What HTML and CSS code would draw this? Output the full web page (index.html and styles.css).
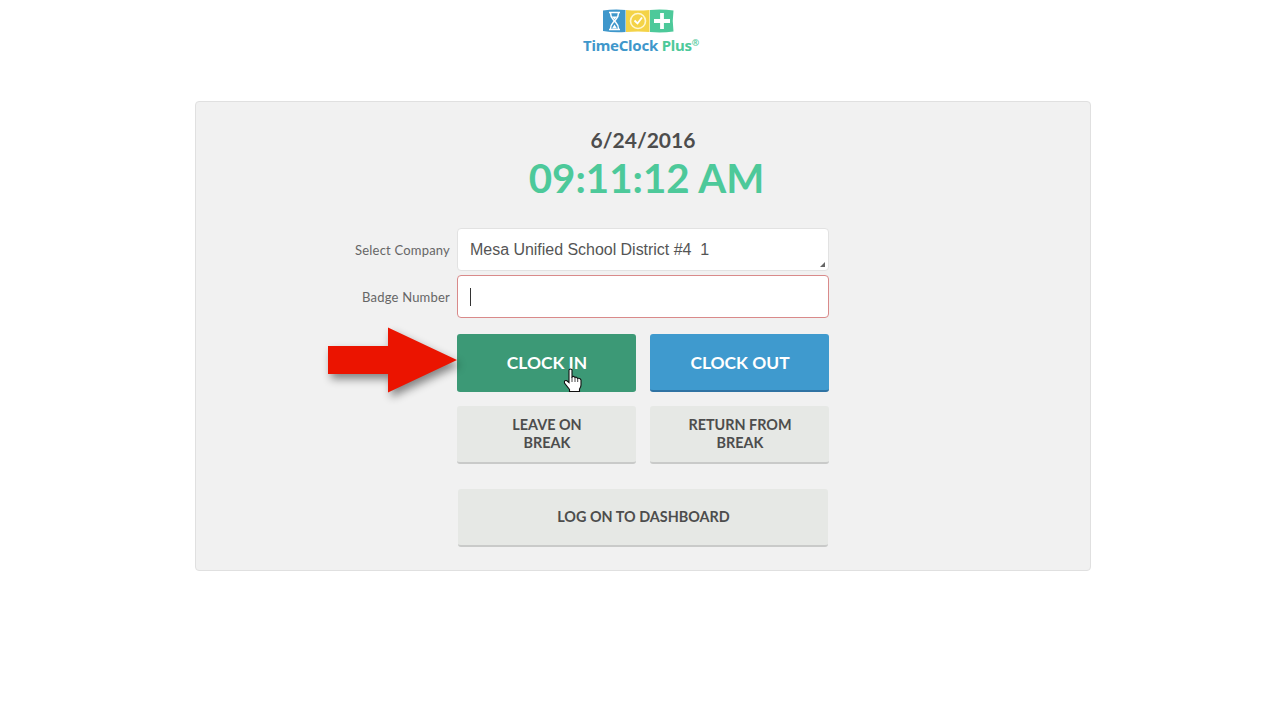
FILE: index.html
```html
<!DOCTYPE html>
<html lang="en">
<head>
    <meta charset="UTF-8">
    <meta name="viewport" content="width=device-width, initial-scale=1.0">
    <title>TimeClock Plus</title>
    <link rel="stylesheet" href="styles.css">
</head>
<body>
    <header class="header">
        <svg class="logo-icon" width="72" height="24" viewBox="0 0 72 24">
            <path d="M1 1.5 Q12 0 23.5 1 V23 Q12 24 1 22 Z" fill="#3f97cb"/>
            <path d="M24 1 Q36 2 47.5 1 V23 Q36 22 24 23 Z" fill="#f4d347"/>
            <path d="M48 1 Q60 0 71.5 1.5 Q70 12 71.5 22.5 Q60 24 48 23 Z" fill="#4dc99a"/>
            <path d="M7 3.5 H18 M7 20.5 H18 M8.5 4 C8.5 9 11 10 12.5 12 C11 14 8.5 15 8.5 20 M16.5 4 C16.5 9 14 10 12.5 12 C14 14 16.5 15 16.5 20" fill="none" stroke="#fff" stroke-width="1.5"/>
            <path d="M10 19.5 L12.5 15.5 L15 19.5 Z M10 7.5 H15 L12.5 10.5 Z" fill="#fff"/>
            <circle cx="36" cy="12" r="7.5" fill="none" stroke="#fff7cf" stroke-width="1.6"/>
            <path d="M32.5 11.5 L35.5 14.5 L40 8.5" fill="none" stroke="#fff" stroke-width="1.8"/>
            <path d="M60 4 V20 M52 12 H68" stroke="#fff" stroke-width="3.8"/>
        </svg>
        <div class="logo-text">TimeClock <span class="plus">Plus<sup>®</sup></span></div>
    </header>

    <main class="panel">
        <div class="date">6/24/2016</div>
        <div class="time">09:11:12 AM</div>

        <div class="form">
            <label class="label">Select Company</label>
            <div class="field select">Mesa Unified School District #4&nbsp; 1</div>
            <label class="label">Badge Number</label>
            <div class="field error"><span class="caret"></span></div>
        </div>

        <div class="buttons">
            <button class="btn clock-in">CLOCK IN
                <svg class="arrow" width="150" height="90" viewBox="0 0 150 90">
                    <path d="M10 28 H70 V9.5 L139 42 L70 74.5 V56 H10 Z" fill="#eb1400"/>
                </svg>
                <svg class="cursor" width="20" height="25" viewBox="0 0 20 25">
                    <path d="M6 2 Q7.5 0 9 2 V9 Q10.5 7.5 12 9.5 Q13.5 8.5 14.5 10.5 Q17 9.5 18 12 V17 Q18 19 16.5 21 V23.5 H6.5 V21.5 L1.5 15 Q1 12 3.5 12.5 L6 14.5 Z" fill="#fff" stroke="#111" stroke-width="1.1"/>
                    <path d="M9 9 V14 M12 9.5 V14 M14.7 10.5 V14" stroke="#333" stroke-width="0.9"/>
                </svg>
            </button>
            <button class="btn clock-out">CLOCK OUT</button>
            <button class="btn">LEAVE ON<br>BREAK</button>
            <button class="btn">RETURN FROM<br>BREAK</button>
            <button class="btn dashboard">LOG ON TO DASHBOARD</button>
        </div>
    </main>
</body>
</html>
```
FILE: styles.css
```css
* {
    box-sizing: border-box;
}
body {
    margin: 0;
    background: #fff;
    font-family: Lato, sans-serif;
    color: #4d4d4d;
}
.header {
    height: 101px;
    padding: 9px 0 0 2px;
    display: flex;
    flex-direction: column;
    align-items: center;
}
.logo-icon {
    display: block;
    margin-right: 6px;
}
.logo-text {
    font-family: "Noto Sans", sans-serif;
    font-size: 15px;
    line-height: 20px;
    margin-top: 2px;
    font-weight: 700;
    letter-spacing: -0.25px;
    color: #3f97cb;
    white-space: nowrap;
}
.plus {
    color: #4dc99a;
}
.plus sup {
    font-size: 9px;
    line-height: 0;
    vertical-align: 5px;
}
.panel {
    width: 896px;
    height: 470px;
    margin-left: 195px;
    background: #f1f1f1;
    border: 1px solid #e0e0e0;
    border-radius: 4px;
    padding-top: 24px;
}
.date {
    text-align: center;
    font-size: 21px;
    line-height: 28px;
    font-weight: 700;
}
.time {
    text-align: center;
    padding-left: 7px;
    font-size: 40.3px;
    line-height: 46px;
    margin-top: 1px;
    font-weight: 700;
    color: #4dc99a;
}
.form {
    display: grid;
    grid-template-columns: 254px 372px;
    grid-template-rows: 43px 43px;
    column-gap: 7px;
    row-gap: 4px;
    align-items: center;
    margin-top: 27px;
}
.label {
    text-align: right;
    font-size: 13px;
    letter-spacing: 0.2px;
    color: #666;
}
.field {
    height: 43px;
    padding: 0 12px;
    display: flex;
    align-items: center;
    background: #fff;
    border: 1px solid #e2e2e2;
    border-radius: 4px;
    font-family: "Liberation Sans", Arial, sans-serif;
    font-size: 16px;
    letter-spacing: -0.03px;
    color: #555;
    position: relative;
}
.select {
    padding-top: 1px;
}
.select::after {
    content: "";
    position: absolute;
    right: 3px;
    bottom: 3px;
    border-left: 5px solid transparent;
    border-bottom: 5px solid #666;
}
.error {
    border-color: #d98a8a;
}
.caret {
    width: 1px;
    height: 18px;
    background: #333;
}
.buttons {
    display: grid;
    grid-template-columns: 179px 179px;
    grid-template-rows: 58px 58px 58px;
    column-gap: 14px;
    row-gap: 14px;
    margin: 16px 0 0 261px;
}
.btn {
    position: relative;
    padding: 0 0 1px 1px;
    border: 0;
    border-bottom: 2px solid #c9cac9;
    border-radius: 3px;
    background: #e6e8e5;
    color: #4d4d4d;
    font-family: Lato, sans-serif;
    font-size: 14.4px;
    line-height: 18px;
    font-weight: 700;
}
.clock-in,
.clock-out {
    padding: 1px 0 0 1px;
    font-size: 17.4px;
    color: #fff;
}
.clock-in {
    background: #3c9976;
    border-bottom-color: #3c9976;
}
.clock-out {
    background: #3f9ace;
    border-bottom-color: #2f73a3;
}
.dashboard {
    grid-column: 1 / 3;
    margin: 11px 1px -11px;
}
.arrow {
    position: absolute;
    left: -139px;
    top: -16px;
    filter: drop-shadow(3px 5px 4px rgba(0, 0, 0, 0.45));
    overflow: visible;
}
.cursor {
    position: absolute;
    left: 106px;
    top: 34px;
}
```
